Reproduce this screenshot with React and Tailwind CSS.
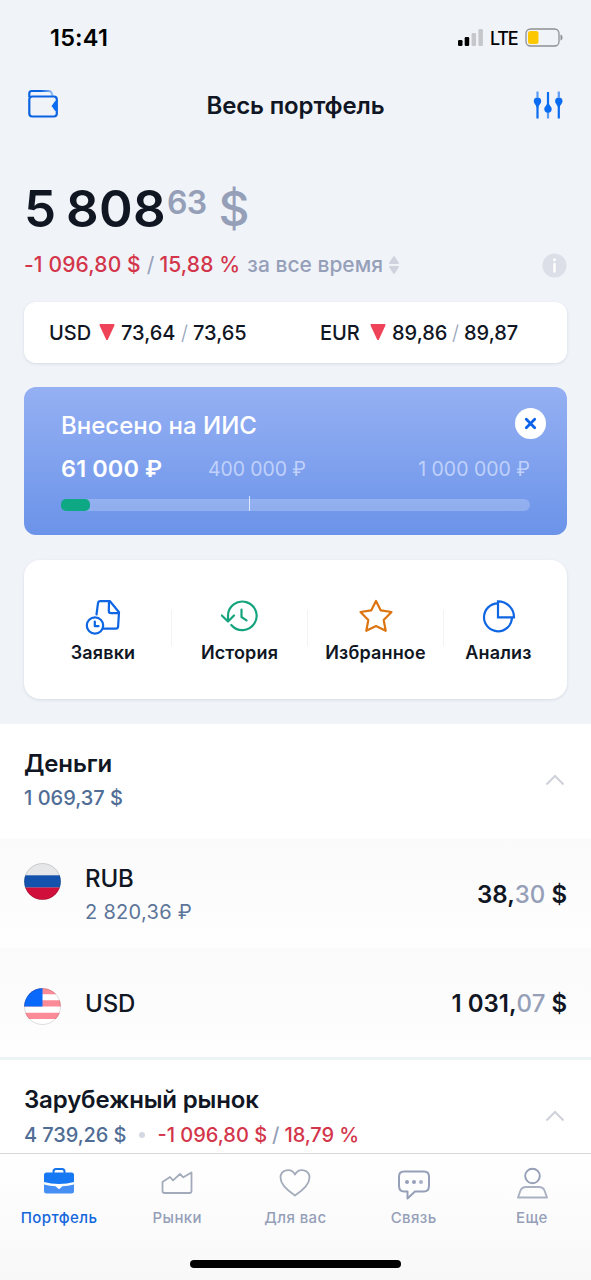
import React from "react";

function StatusBar() {
  return (
    <header className="flex h-[76px] items-center justify-between pl-[50px] pr-[28px] text-black">
      <span className="text-[23.500px] font-semibold tracking-[0.2px]">15:41</span>
      <div className="flex items-center">
        <svg width="27" height="18" viewBox="0 0 27 18">
          <rect x="1" y="11" width="4.5" height="6" rx="1.3" fill="#000" />
          <rect x="7.7" y="8" width="4.5" height="9" rx="1.3" fill="#000" />
          <rect x="14.6" y="4" width="4.5" height="13" rx="1.3" fill="#c5c7ca" />
          <rect x="21.4" y="0" width="4.5" height="17" rx="1.3" fill="#c5c7ca" />
        </svg>
        <span className="ml-[6px] w-[28px] pt-px text-[18px] font-medium tracking-[-1.3px]">LTE</span>
        <svg className="ml-[7px]" width="38" height="20" viewBox="0 0 38 20">
          <rect x="1" y="1" width="33" height="17" rx="4.5" fill="none" stroke="#8e9093" strokeWidth="1.3" />
          <rect x="3" y="3" width="10.5" height="13" rx="2.5" fill="#fdc700" />
          <path d="M35.5 6.5c1.6.7 2 1.7 2 3s-.4 2.300-2 3z" fill="#8e9093" />
        </svg>
      </div>
    </header>
  );
}

function TitleBar() {
  return (
    <div className="flex h-[60px] items-center justify-between pl-[27px] pr-[27px]">
      <svg className="-mt-[4px]" width="32" height="30" viewBox="0 0 32 30" fill="none" stroke="#0a63e0" strokeWidth="2.200">
        <defs>
          <linearGradient id="flap" x1="0" x2="1">
            <stop offset="0.5" stopColor="#0a63e0" />
            <stop offset="1" stopColor="#9cc0f3" />
          </linearGradient>
        </defs>
        <path d="M2.300 8V4.500q0-2.500 2.500-2.500H21.500q3.500 0 4 5" stroke="url(#flap)" />
        <rect x="2.300" y="7.500" width="27.500" height="20" rx="3" />
        <path d="M30 11.500c-3 .5-3 3-5.500 5.500 2.500 2.500 2.500 5 5.500 5.500z" fill="#0a6cf0" stroke="none" />
      </svg>
      <h1 className="text-[24px] font-semibold tracking-[-0.15px] text-[#101623]">Весь портфель</h1>
      <svg className="-mt-[3px]" width="32" height="30" viewBox="0 0 32 30" stroke="#0a6cf0" strokeWidth="2.200" fill="#0a6cf0">
        <path d="M5.500 8v20.500M16 2v18M26.800 8v20.500" />
        <path d="M5.500 1.500v6M16 22v6.500M26.800 1.500v6" stroke="#5b9bf3" />
        <path d="M5.500 7.500a3.700 3.700 0 0 1 3.700 3.700c0 2.500-2.300 3.100-3.100 6.600h-1.200c-.8-3.500-3.100-4.100-3.100-6.600a3.700 3.700 0 0 1 3.700-3.700zM26.800 7.500a3.700 3.700 0 0 1 3.700 3.700c0 2.500-2.300 3.100-3.100 6.600h-1.200c-.8-3.500-3.100-4.100-3.100-6.600a3.700 3.700 0 0 1 3.700-3.700zM16 22.700a3.700 3.700 0 0 0 3.700-3.700c0-2.500-2.300-3.100-3.100-6.600h-1.200c-.8 3.500-3.100 4.100-3.100 6.600a3.700 3.700 0 0 0 3.700 3.700z" stroke="none" />
      </svg>
    </div>
  );
}

function Balance() {
  return (
    <section className="flex flex-col px-[24px] pt-[43px]">
      <div className="flex h-[60px] items-center leading-[60px] text-[#959fb8]">
        <span className="text-[51px] font-semibold text-[#111722]">5</span>
        <span className="ml-[10px] text-[51px] font-semibold tracking-[0.3px] text-[#111722]">808</span>
        <span className="ml-px -mt-[13px] text-[32px] font-semibold tracking-[-0.6px]">63</span>
        <span className="ml-[12px] text-[48px] font-medium">$</span>
      </div>
      <div className="mt-[10px] flex h-[32px] items-center text-[21px] leading-[32px] text-[#959fb8]">
        <span className="font-[450] tracking-[0.15px] text-[#d3364b]">-1 096,80 $</span>
        <span className="ml-[6px]">/</span>
        <span className="ml-[5px] font-[450] tracking-[0.15px] text-[#d3364b]">15,88 %</span>
        <span className="ml-[7px] font-[450]">за все время</span>
        <svg className="ml-[5px]" width="12" height="20" viewBox="0 0 12 20" fill="#d0d3dd">
          <path d="M6 .5l5 7.500q0 1-1 1H2q-1 0-1-1zM6 19.500l5-7.500q0-1-1-1H2q-1 0-1 1z" />
        </svg>
        <svg className="ml-auto" width="25" height="25" viewBox="0 0 25 25">
          <circle cx="12.500" cy="12.500" r="12" fill="#dcdfe7" />
          <circle cx="12.500" cy="6.800" r="1.500" fill="#fff" />
          <path d="M12.500 11v7.500" stroke="#fff" strokeWidth="2.400" strokeLinecap="round" />
        </svg>
      </div>
    </section>
  );
}

function Rate({ code, bid, ask }) {
  return (
    <div className="flex w-[271px] shrink-0 items-center">
      <span className="w-[50px]">{code}</span>
      <svg className="-mt-[2px]" width="16" height="18" viewBox="0 0 16 18">
        <path d="M1.500 2h13L8 16z" fill="#ee4358" stroke="#ee4358" strokeWidth="2" strokeLinejoin="round" />
      </svg>
      <span className="ml-[6px] w-[54px]">{bid}</span>
      <span className="ml-[6px] w-[12px] font-light text-[#959fb8]">/</span>
      <span>{ask}</span>
    </div>
  );
}

function Contribution() {
  return (
    <section className="mx-[24px] mt-[24px] h-[148px] rounded-[12px] bg-linear-to-b from-[#95b0f3] to-[#6b93e9] pl-[37px] pr-[21px] text-white">
      <div className="flex h-[49px] items-start justify-between pt-[21px]">
        <h2 className="pt-[3px] text-[24px] font-medium leading-[30px]">Внесено на ИИС</h2>
        <button className="flex size-[31px] items-center justify-center rounded-full bg-white">
          <svg width="13" height="13" viewBox="0 0 13 13" stroke="#0a62ea" strokeWidth="2.800" strokeLinecap="round">
            <path d="M2.300 2.300l8.400 8.400M10.700 2.300l-8.400 8.400" />
          </svg>
        </button>
      </div>
      <div className="mr-[16px] mt-[16px] flex h-[34px] items-center">
        <span className="w-[147px] text-[23.500px] font-semibold tracking-[0.1px]">61 000 ₽</span>
        <span className="pt-px text-[19.500px] tracking-[-0.1px] text-[#c0d1fa]">400 000 ₽</span>
        <span className="ml-auto pt-px text-[19.500px] text-[#c0d1fa]">1 000 000 ₽</span>
      </div>
      <div className="mr-[16px] mt-[10px] flex h-[18px] items-center">
        <div className="flex h-[12px] flex-1 rounded-full bg-white/22">
          <div className="h-full w-[29px] rounded-[5px] bg-[#0fa884]" />
          <div className="-mt-[3px] ml-[159px] h-[15px] w-px bg-white/70" />
        </div>
      </div>
    </section>
  );
}

function Action({ label, width, children }) {
  return (
    <button className={`flex flex-col items-center ${width}`}>
      {children}
      <span className="mt-[5px] text-[18px] font-semibold leading-[24px] tracking-[0.15px] text-[#101623]">{label}</span>
    </button>
  );
}

const stroke = { fill: "none", strokeWidth: 2.2, strokeLinecap: "round", strokeLinejoin: "round" };

function Divider() {
  return <div className="mt-[12px] h-[36px] w-px bg-[#f3f3f5]" />;
}

function Actions() {
  return (
    <section className="mx-[24px] mt-[25px] flex h-[139px] rounded-[16px] bg-white pt-[38px] shadow-[0_1px_3px_rgba(60,80,120,0.14)]">
      <Action label="Заявки" width="w-[147px] pl-[11px]">
        <svg width="38" height="38" viewBox="0 0 38 38" {...stroke} stroke="#0f66e3">
          <path d="M12.500 16.500l1.500-11.300q.3-2 2.300-2H26l9 11-.9 14.500q-.2 2-2.200 2H19.500" />
          <path d="M25 3.500l-.2 9.500q0 2.200 2.200 2.200H34" />
          <circle cx="11" cy="27.500" r="8.200" />
          <path d="M10.800 23.500v4.700h3.700" />
        </svg>
      </Action>
      <Divider />
      <Action label="История" width="w-[135px]">
        <svg width="38" height="38" viewBox="0 0 38 38" {...stroke} stroke="#15a47e">
          <path d="M7 22.500V18a14.300 14.300 0 1 1 3.300 9" />
          <path d="M.8 17.500l6.200 6 6-6M20.500 11.500v7.500l5 3.300" />
        </svg>
      </Action>
      <Divider />
      <Action label="Избранное" width="w-[135px]">
        <svg width="38" height="38" viewBox="0 0 38 38" {...stroke} stroke="#dc750f">
          <path d="M19 3l4.800 9.400 10.700 1.600-7.800 8 2 10.800L19 28 9.300 32.800l2-10.800-7.800-8 10.700-1.600z" />
        </svg>
      </Action>
      <Divider />
      <Action label="Анализ" width="w-[109px]">
        <svg width="38" height="38" viewBox="0 0 38 38" fill="none" stroke="#0f66e3" strokeWidth="2.200">
          <path d="M18 3.300V19.300H34A16 16 0 0 0 18 3.300z" />
          <path d="M18 5.300a14 14 0 1 0 14 14.300" />
        </svg>
      </Action>
    </section>
  );
}

function Chevron() {
  return (
    <svg className="mr-[2px]" width="20" height="12" viewBox="0 0 20 12" fill="none" stroke="#cfd1da" strokeWidth="2">
      <path d="M1.500 10.500L10 2l8.500 8.500" />
    </svg>
  );
}

function SectionHead({ title, children }) {
  return (
    <div className="flex items-start justify-between px-[24px] pt-[24px]">
      <div>
        <h2 className="text-[24px] font-semibold leading-[32px] tracking-[-0.15px] text-[#101623]">{title}</h2>
        <div className="mt-[3px] flex items-center text-[20px] font-[450] leading-[30px] text-[#506d95]">{children}</div>
      </div>
      <div className="pt-[26px]">
        <Chevron />
      </div>
    </div>
  );
}

function Amount({ whole, cents }) {
  return (
    <span className="ml-auto whitespace-pre text-[24px] font-semibold text-[#101623]">
      {whole},<span className="font-medium text-[#959fb8]">{cents}</span> $
    </span>
  );
}

function Tab({ label, active, children }) {
  return (
    <button className={`flex w-1/5 flex-col items-center pt-[12px] ${active ? "text-[#1467db]" : ""}`}>
      {children}
      <span className="mt-[7px] leading-[22px]">{label}</span>
    </button>
  );
}

function Nav() {
  return (
    <footer className="h-[127px] border-t-[1.500px] border-[#d8d9db] bg-linear-to-b from-white to-[#f8f8f9]">
      <nav className="flex text-[15px] font-[450] tracking-[0.4px] text-[#959fb8]">
        <Tab label="Портфель" active>
          <svg width="34" height="34" viewBox="0 0 34 34" fill="#1678f2">
            <path d="M11.500 7V5.500q0-2.500 2.500-2.500h6q2.500 0 2.500 2.500V7" fill="none" stroke="#1673e8" strokeWidth="2" />
            <path d="M4.500 6.500h25q2.500 0 2.500 2.500v7q-7 2-15 2T2 16V9q0-2.500 2.500-2.500z" />
            <path d="M2 18.500q6 1.500 11.500 1.700l3.500 3 3.500-3Q26 20 32 18.500V25q0 2.500-2.500 2.500h-25Q2 27.500 2 25z" fill="#468ff5" />
          </svg>
        </Tab>
        <Tab label="Рынки">
          <svg width="34" height="34" viewBox="0 0 34 34" {...stroke} strokeWidth="1.800" stroke="#a3abba">
            <path d="M2.500 16l7.500-5 3 3.300L20 8l3.300 3.300L31.500 6.500v18.500q0 2-2 2H4.500q-2 0-2-2z" />
          </svg>
        </Tab>
        <Tab label="Для вас">
          <svg width="34" height="34" viewBox="0 0 34 34" {...stroke} strokeWidth="1.800" stroke="#a3abba">
            <path d="M17 29.500C11 25.500 2.500 18.500 2.500 11.500c0-7.500 10.500-10.500 14.500-3 4-7.500 14.500-4.500 14.500 3C31.500 18.500 23 25.500 17 29.500z" />
          </svg>
        </Tab>
        <Tab label="Связь">
          <svg width="34" height="34" viewBox="0 0 34 34" {...stroke} strokeWidth="2" stroke="#959fb8">
            <path d="M7 5.500h20q5 0 5 5v9q0 6-5 6h-9l-7.500 7v-7H7q-5 0-5-6v-9q0-5 5-5z" />
            <g fill="#959fb8" stroke="none">
              <circle cx="10" cy="16" r="2" />
              <circle cx="17" cy="16" r="2" />
              <circle cx="24" cy="16" r="2" opacity=".8" />
            </g>
          </svg>
        </Tab>
        <Tab label="Еще">
          <svg width="34" height="34" viewBox="0 0 34 34" {...stroke} strokeWidth="1.900" stroke="#959fb8">
            <circle cx="17.500" cy="10" r="7.300" />
            <path d="M3 31.500l2.500-7q1.500-3.500 5.500-3.500h13q4 0 5.500 3.500l2.500 7z" stroke="#a9b1c2" />
          </svg>
        </Tab>
      </nav>
      <div className="mx-auto mt-[31px] h-[8px] w-[211px] rounded-full bg-black" />
    </footer>
  );
}

export default function App() {
  return (
    <div className="flex h-[1280px] w-[591px] flex-col overflow-hidden bg-white font-['Inter','Noto_Sans',sans-serif] whitespace-nowrap">
      <div className="h-[724px] shrink-0 bg-[#f0f3f8]">
        <StatusBar />
        <TitleBar />
        <Balance />
        <section className="mx-[24px] mt-[21px] flex h-[61px] rounded-[12px] bg-white pl-[25px] text-[20px] font-[450] text-[#101623] shadow-[0_1px_3px_rgba(60,80,120,0.14)]">
          <Rate code="USD" bid="73,64" ask="73,65" />
          <Rate code="EUR" bid="89,86" ask="89,87" />
        </section>
        <Contribution />
        <Actions />
      </div>
      <main className="min-h-0 flex-1 overflow-hidden">
        <div className="h-[115px]">
          <SectionHead title="Деньги">1 069,37 $</SectionHead>
        </div>
        <div className="flex h-[109px] bg-linear-to-b from-[#fafafb] to-[#fefefe] px-[24px]">
          <svg className="mt-[24px]" width="37" height="37" viewBox="0 0 37 37">
            <clipPath id="ru"><circle cx="18.500" cy="18.500" r="18.300" /></clipPath>
            <g clipPath="url(#ru)">
              <rect width="37" height="37" fill="#e6e7e8" />
              <rect y="12.300" width="37" height="12.300" fill="#1353ae" />
              <rect y="24.500" width="37" height="13" fill="#d0103a" />
            </g>
            <circle cx="18.500" cy="18.500" r="18" fill="none" stroke="#00000022" />
          </svg>
          <div className="ml-[24px] mt-[24px]">
            <div className="text-[24px] font-[550] leading-[32px] tracking-[-0.1px] text-[#101623]">RUB</div>
            <div className="mt-[2px] text-[20px] leading-[30px] tracking-[0.3px] text-[#5d7599]">2 820,36 ₽</div>
          </div>
          <div className="ml-auto flex items-center pt-[2px]"><Amount whole="38" cents="30" /></div>
        </div>
        <div className="flex h-[109px] items-center bg-linear-to-b from-[#fafafb] to-[#fefefe] px-[24px] pt-[2px]">
          <svg className="mt-[5px]" width="37" height="37" viewBox="0 0 37 37">
            <clipPath id="us"><circle cx="18.500" cy="18.500" r="18.300" /></clipPath>
            <g clipPath="url(#us)">
              <rect width="37" height="37" fill="#fff" />
              <path d="M0 0h37v6.200H0zM0 12.300h37v6.200H0zM0 24.700h37v6.200H0z" fill="#fb8c97" />
              <rect width="18.500" height="18.500" fill="#0a69fb" />
            </g>
            <circle cx="18.500" cy="18.500" r="18" fill="none" stroke="#00000022" />
          </svg>
          <span className="ml-[24px] text-[24px] font-[550] tracking-[-0.1px] text-[#101623]">USD</span>
          <Amount whole="1 031" cents="07" />
        </div>
        <div className="h-[3px] bg-[#edf4f5]" />
        <SectionHead title="Зарубежный рынок">
          <span className="pt-px tracking-[-0.1px]">4 739,26 $</span>
          <span className="ml-[13px] mr-[12px] size-[6px] rounded-full bg-[#d3d8e2]" />
          <span className="pt-px text-[#d3364b]">-1 096,80 $</span>
          <span className="mx-[5px] pt-px text-[#959fb8]">/</span>
          <span className="pt-px tracking-[-0.1px] text-[#d3364b]">18,79 %</span>
        </SectionHead>
      </main>
      <Nav />
    </div>
  );
}
